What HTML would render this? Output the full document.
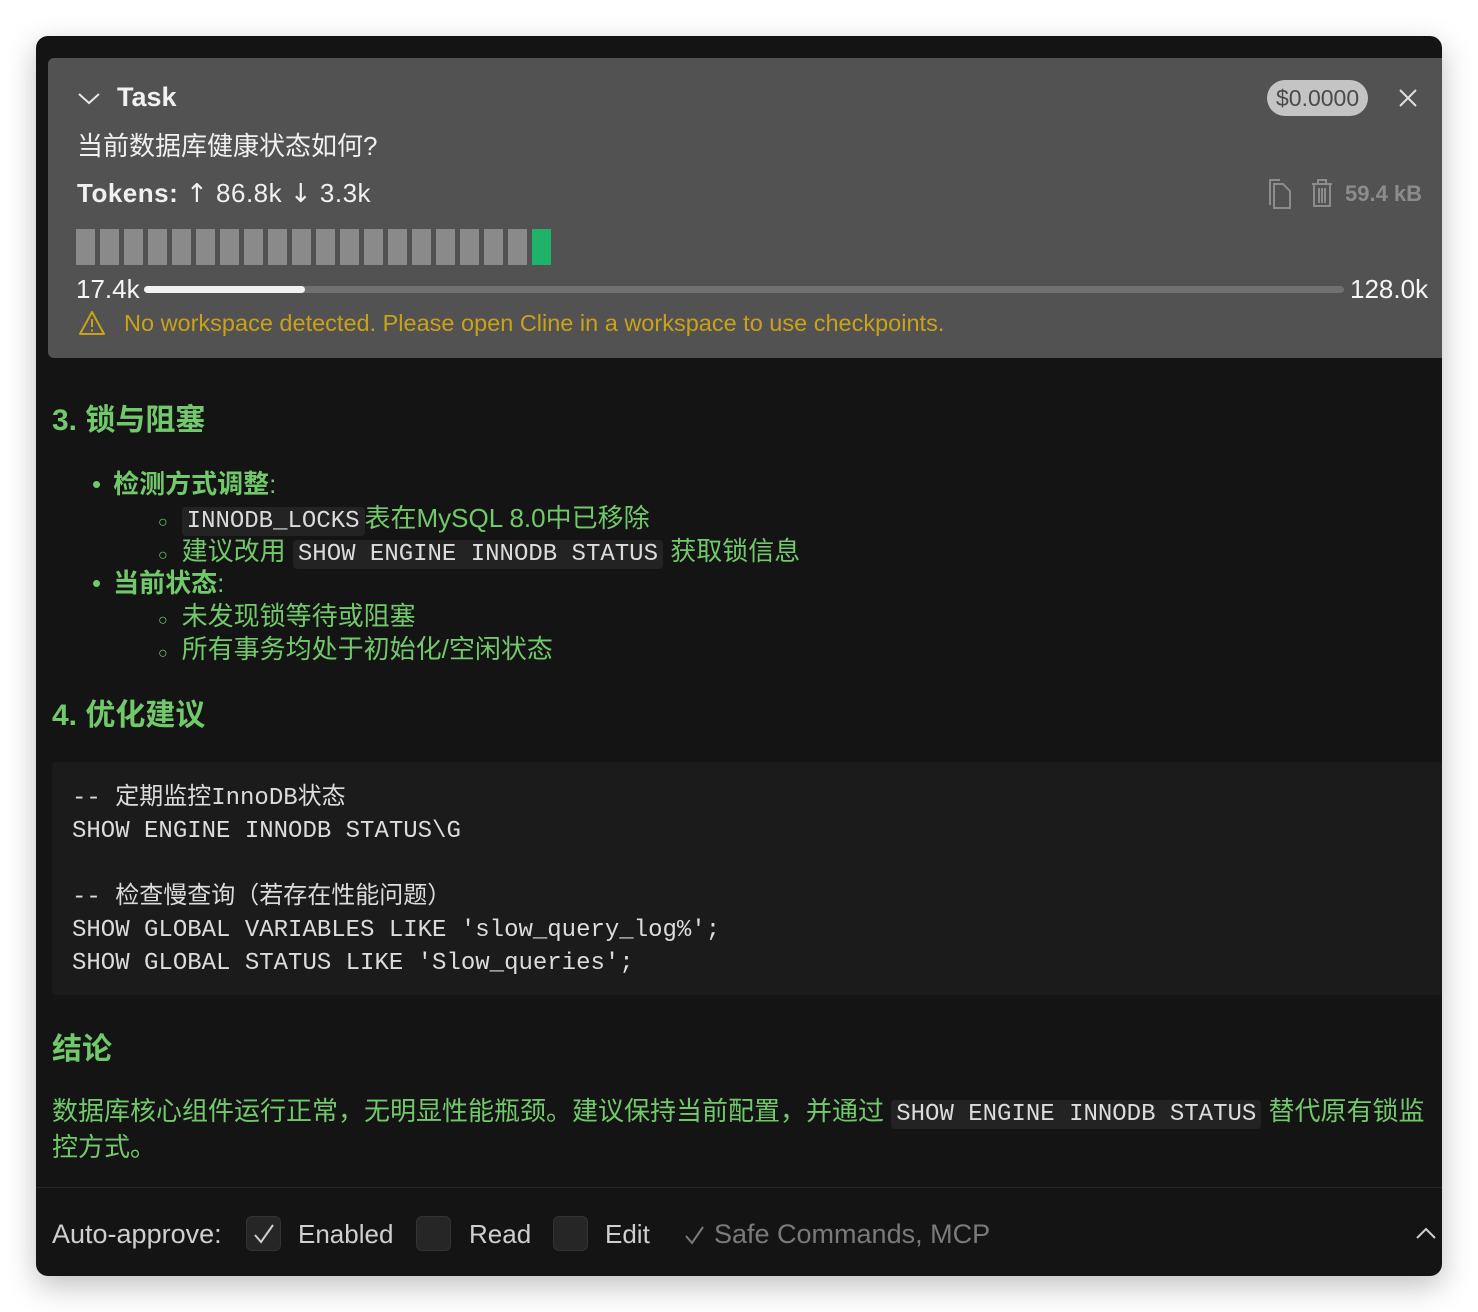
<!DOCTYPE html>
<html><head><meta charset="utf-8">
<style>
*{margin:0;padding:0;box-sizing:border-box}
body{width:1478px;height:1312px;background:#fff;position:relative;overflow:hidden;font-family:"Liberation Sans","Noto Sans CJK SC",sans-serif}
.win{position:absolute;left:36px;top:36px;width:1406px;height:1240px;background:#141414;border-radius:12px;box-shadow:0 10px 30px rgba(0,0,0,.25);overflow:hidden}
.task{position:absolute;left:12px;top:22px;width:1394px;height:300px;background:#525252;border-radius:6px 0 0 6px}
.a{position:absolute;white-space:nowrap}
.g{color:#72c96b}
.mono{font-family:"Liberation Mono","Noto Sans CJK SC",monospace}
code{font-family:"Liberation Mono","Noto Sans CJK SC",monospace;font-size:24px;color:#dcdcdc;background:#232323;border-radius:4px;padding:1px 5px}
.bar{position:absolute;top:171px;width:19px;height:36px;background:#8a8a8a}
.cb{position:absolute;top:1180px;width:35px;height:35px;background:#262626;border:1px solid #333;border-radius:6px}
</style></head><body>
<div class="win">
<div class="task">
<svg class="a" style="left:29px;top:33px" width="24" height="16" viewBox="0 0 24 16"><path d="M2 3 L12 12 L22 3" stroke="#e8e8e8" stroke-width="2" fill="none"/></svg>
<div class="a" style="left:69px;top:24px;font-size:27px;font-weight:bold;color:#f0f0f0">Task</div>
<div class="a" style="left:1219px;top:22px;height:36px;padding:0 9px;background:#c4c4c4;border-radius:18px;font-size:23px;line-height:36px;color:#4a4a4a">$0.0000</div>
<svg class="a" style="left:1350px;top:30px" width="20" height="20" viewBox="0 0 20 20"><path d="M2 2L18 18M18 2L2 18" stroke="#e0e0e0" stroke-width="2"/></svg>
<div class="a" style="left:29px;top:68px;font-size:26px;color:#f0f0f0">当前数据库健康状态如何?</div>
<div class="a" style="left:29px;top:120px;font-size:26px;color:#f0f0f0;letter-spacing:0.5px"><b>Tokens:</b> <span style="font-family:'DejaVu Sans'">↑</span> 86.8k <span style="font-family:'DejaVu Sans'">↓</span> 3.3k</div>
<svg class="a" style="left:1218px;top:120px" width="28" height="32" viewBox="0 0 28 32"><path d="M8 6H17L24 13V30H8Z" stroke="#8c8c8c" stroke-width="2" fill="none"/><path d="M4 27V2H14" stroke="#8c8c8c" stroke-width="2" fill="none"/></svg>
<svg class="a" style="left:1262px;top:120px" width="24" height="30" viewBox="0 0 24 30"><path d="M2 6H22M8 6V2H16V6M4 6V28H20V6M9 10V25M12 10V25M15 10V25" stroke="#8c8c8c" stroke-width="2" fill="none"/></svg>
<div class="a" style="left:1297px;top:123px;font-size:22px;font-weight:bold;color:#8c8c8c">59.4 kB</div>
<div class="bar" style="left:28px"></div><div class="bar" style="left:52px"></div><div class="bar" style="left:76px"></div><div class="bar" style="left:100px"></div><div class="bar" style="left:124px"></div><div class="bar" style="left:148px"></div><div class="bar" style="left:172px"></div><div class="bar" style="left:196px"></div><div class="bar" style="left:220px"></div><div class="bar" style="left:244px"></div><div class="bar" style="left:268px"></div><div class="bar" style="left:292px"></div><div class="bar" style="left:316px"></div><div class="bar" style="left:340px"></div><div class="bar" style="left:364px"></div><div class="bar" style="left:388px"></div><div class="bar" style="left:412px"></div><div class="bar" style="left:436px"></div><div class="bar" style="left:460px"></div><div class="bar" style="left:484px;background:#1fb36a"></div>
<div class="a" style="left:28px;top:216px;font-size:26px;color:#f5f5f5">17.4k</div>
<div class="a" style="left:96px;top:228px;width:1200px;height:7px;background:#707070;border-radius:4px"></div>
<div class="a" style="left:96px;top:228px;width:161px;height:7px;background:#f2f2f2;border-radius:4px"></div>
<div class="a" style="left:1302px;top:216px;font-size:26px;color:#f5f5f5">128.0k</div>
<svg class="a" style="left:30px;top:252px" width="28" height="26" viewBox="0 0 28 26"><path d="M14 2L26 24H2Z" stroke="#c9a21a" stroke-width="2" fill="none" stroke-linejoin="round"/><path d="M14 9V17M14 19.5V21.5" stroke="#c9a21a" stroke-width="2"/></svg>
<div class="a" style="left:76px;top:252px;font-size:23.5px;color:#c9a21a">No workspace detected. Please open Cline in a workspace to use checkpoints.</div>
</div>

<div class="a g" style="left:16px;top:359px;font-size:30px;font-weight:bold">3. 锁与阻塞</div>
<div class="a g" style="left:56px;top:428px;font-size:26px"><span style="margin-right:12px">•</span><b>检测方式调整</b>:</div>
<div class="a g" style="left:122px;top:462px;font-size:26px"><span style="font-size:16px;margin-right:14px">○</span><code>INNODB_LOCKS</code>表在MySQL 8.0中已移除</div>
<div class="a g" style="left:122px;top:495px;font-size:26px"><span style="font-size:16px;margin-right:14px">○</span>建议改用 <code>SHOW ENGINE INNODB STATUS</code> 获取锁信息</div>
<div class="a g" style="left:56px;top:527px;font-size:26px"><span style="margin-right:12px">•</span><b>当前状态</b>:</div>
<div class="a g" style="left:122px;top:560px;font-size:26px"><span style="font-size:16px;margin-right:14px">○</span>未发现锁等待或阻塞</div>
<div class="a g" style="left:122px;top:593px;font-size:26px"><span style="font-size:16px;margin-right:14px">○</span>所有事务均处于初始化/空闲状态</div>
<div class="a g" style="left:16px;top:654px;font-size:30px;font-weight:bold">4. 优化建议</div>
<div class="a" style="left:16px;top:726px;width:1390px;height:233px;background:#1b1b1b;border-radius:4px"></div>
<pre class="mono" style="position:absolute;left:36px;top:746px;font-size:24px;line-height:33px;color:#dcdcdc;white-space:pre">-- 定期监控InnoDB状态
SHOW ENGINE INNODB STATUS\G

-- 检查慢查询（若存在性能问题）
SHOW GLOBAL VARIABLES LIKE 'slow_query_log%';
SHOW GLOBAL STATUS LIKE 'Slow_queries';</pre>
<div class="a g" style="left:16px;top:988px;font-size:30px;font-weight:bold">结论</div>
<div class="a g" style="left:16px;top:1059px;font-size:26px;line-height:33px;white-space:normal;width:1385px">数据库核心组件运行正常，无明显性能瓶颈。建议保持当前配置，并通过 <code>SHOW ENGINE INNODB STATUS</code> 替代原有锁监控方式。</div>
<div class="a" style="left:0;top:1151px;width:1406px;height:1px;background:#262626"></div>
<div class="a" style="left:16px;top:1183px;font-size:27px;color:#cfcfcf">Auto-approve:</div>
<div class="cb" style="left:210px"></div>
<svg class="a" style="left:215px;top:1185px" width="26" height="26" viewBox="0 0 26 26"><path d="M4 14L10 21L22 4" stroke="#cfcfcf" stroke-width="2" fill="none"/></svg>
<div class="a" style="left:262px;top:1183px;font-size:26px;color:#cfcfcf">Enabled</div>
<div class="cb" style="left:380px"></div>
<div class="a" style="left:433px;top:1183px;font-size:26px;color:#cfcfcf">Read</div>
<div class="cb" style="left:517px"></div>
<div class="a" style="left:569px;top:1183px;font-size:26px;color:#cfcfcf">Edit</div>
<svg class="a" style="left:648px;top:1188px" width="22" height="22" viewBox="0 0 22 22"><path d="M2 12L8 19L19 3" stroke="#7a7a7a" stroke-width="2" fill="none"/></svg>
<div class="a" style="left:678px;top:1183px;font-size:27px;color:#7a7a7a">Safe Commands, MCP</div>
<svg class="a" style="left:1380px;top:1190px" width="20" height="14" viewBox="0 0 20 14"><path d="M1 12L10 3L19 12" stroke="#cfcfcf" stroke-width="2" fill="none"/></svg>
</div>
</body></html>
